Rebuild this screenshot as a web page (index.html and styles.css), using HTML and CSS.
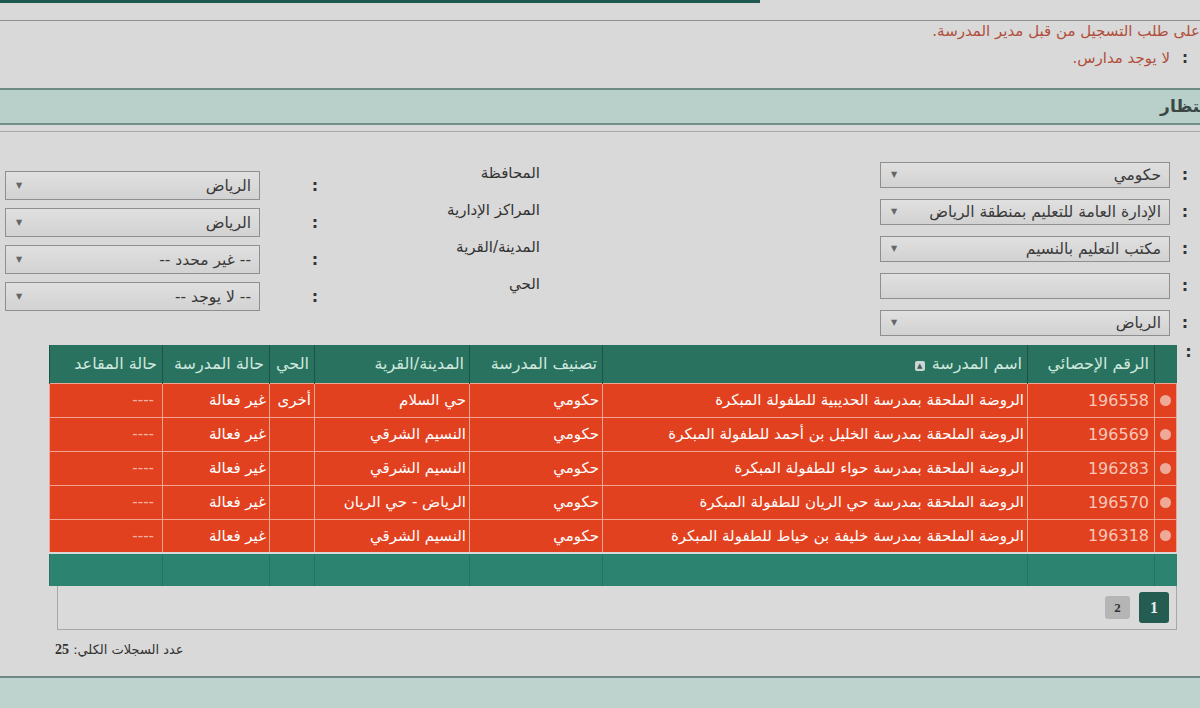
FILE: index.html
```html
<!DOCTYPE html>
<html lang="ar" dir="rtl">
<head>
  <meta charset="UTF-8" />
  <meta name="viewport" content="width=device-width, initial-scale=1.0" />
  <title>المدارس</title>
  <link rel="stylesheet" href="styles.css">
</head>
<body>
  <div class="top-strip"></div>
  <div class="top-area"></div>

  <div class="notes">
    <p class="note">على طلب التسجيل من قبل مدير المدرسة.</p>
    <p class="note"><span class="colon">:</span>لا يوجد مدارس.</p>
  </div>

  <div class="section-bar">
    <h2>انتظار</h2>
  </div>
  <div class="section-line"></div>

  <div class="search-form">
    <div class="col-main">
      <div class="field">
        <span class="colon">:</span>
        <div class="dropdown"><span>حكومي</span><span class="arrow">▼</span></div>
      </div>
      <div class="field">
        <span class="colon">:</span>
        <div class="dropdown"><span>الإدارة العامة للتعليم بمنطقة الرياض</span><span class="arrow">▼</span></div>
      </div>
      <div class="field">
        <span class="colon">:</span>
        <div class="dropdown"><span>مكتب التعليم بالنسيم</span><span class="arrow">▼</span></div>
      </div>
      <div class="field">
        <span class="colon">:</span>
        <div class="dropdown"></div>
      </div>
      <div class="field">
        <span class="colon">:</span>
        <div class="dropdown"><span>الرياض</span><span class="arrow">▼</span></div>
      </div>
    </div>

    <div class="col-side">
      <div class="field">
        <label>المحافظة</label>
        <span class="colon">:</span>
        <div class="dropdown"><span>الرياض</span><span class="arrow">▼</span></div>
      </div>
      <div class="field">
        <label>المراكز الإدارية</label>
        <span class="colon">:</span>
        <div class="dropdown"><span>الرياض</span><span class="arrow">▼</span></div>
      </div>
      <div class="field">
        <label>المدينة/القرية</label>
        <span class="colon">:</span>
        <div class="dropdown"><span>-- غير محدد --</span><span class="arrow">▼</span></div>
      </div>
      <div class="field">
        <label>الحي</label>
        <span class="colon">:</span>
        <div class="dropdown"><span>-- لا يوجد --</span><span class="arrow">▼</span></div>
      </div>
    </div>
  </div>

  <div class="results">
    <span class="colon">:</span>
    <div class="results-box">
      <table class="grid">
        <thead>
          <tr>
            <th class="c-radio"></th>
            <th class="c-num">الرقم الإحصائي</th>
            <th class="c-name">اسم المدرسة <span class="sort">&#9650;</span></th>
            <th class="c-type">تصنيف المدرسة</th>
            <th class="c-city">المدينة/القرية</th>
            <th class="c-hay">الحي</th>
            <th class="c-state">حالة المدرسة</th>
            <th class="c-seats">حالة المقاعد</th>
          </tr>
        </thead>
        <tbody>
          <tr>
            <td><span class="dot"></span></td>
            <td class="num">196558</td>
            <td>الروضة الملحقة بمدرسة الحديبية للطفولة المبكرة</td>
            <td>حكومي</td>
            <td>حي السلام</td>
            <td>أخرى</td>
            <td>غير فعالة</td>
            <td class="dash">----</td>
          </tr>
          <tr>
            <td><span class="dot"></span></td>
            <td class="num">196569</td>
            <td>الروضة الملحقة بمدرسة الخليل بن أحمد للطفولة المبكرة</td>
            <td>حكومي</td>
            <td>النسيم الشرقي</td>
            <td></td>
            <td>غير فعالة</td>
            <td class="dash">----</td>
          </tr>
          <tr>
            <td><span class="dot"></span></td>
            <td class="num">196283</td>
            <td>الروضة الملحقة بمدرسة حواء للطفولة المبكرة</td>
            <td>حكومي</td>
            <td>النسيم الشرقي</td>
            <td></td>
            <td>غير فعالة</td>
            <td class="dash">----</td>
          </tr>
          <tr>
            <td><span class="dot"></span></td>
            <td class="num">196570</td>
            <td>الروضة الملحقة بمدرسة حي الريان للطفولة المبكرة</td>
            <td>حكومي</td>
            <td>الرياض - حي الريان</td>
            <td></td>
            <td>غير فعالة</td>
            <td class="dash">----</td>
          </tr>
          <tr>
            <td><span class="dot"></span></td>
            <td class="num">196318</td>
            <td>الروضة الملحقة بمدرسة خليفة بن خياط للطفولة المبكرة</td>
            <td>حكومي</td>
            <td>النسيم الشرقي</td>
            <td></td>
            <td>غير فعالة</td>
            <td class="dash">----</td>
          </tr>
        </tbody>
        <tfoot>
          <tr>
            <td></td><td></td><td></td><td></td><td></td><td></td><td></td><td></td>
          </tr>
        </tfoot>
      </table>
      <div class="pager">
        <span class="page active">1</span>
        <span class="page">2</span>
      </div>
    </div>
  </div>

  <div class="total">عدد السجلات الكلي: <b>25</b></div>

  <div class="bottom-bar"></div>
</body>
</html>
```

FILE: styles.css
```css
html, body {
  height: 708px;
}
body {
  margin: 0;
  background: #d9d9d9;
  color: #333;
  font-family: "DejaVu Sans", "Noto Sans", sans-serif;
  overflow: hidden;
}
.top-strip {
  height: 3px;
  width: 760px;
  margin-left: 0;
  margin-right: auto;
  background: #1f5a50;
}
.top-area {
  height: 17px;
  border-bottom: 1px solid #8f8f8f;
}
.note {
  margin: 0;
  height: 20px;
  line-height: 20px;
  font-size: 15px;
  color: #b14f3c;
  white-space: nowrap;
}
.note + .note {
  margin-top: 7px;
}
.colon {
  display: inline-block;
  width: 24px;
  text-align: center;
  color: #333;
  font-weight: bold;
}
.note .colon {
  width: 30px;
}
.section-bar {
  margin-top: 20px;
  height: 33px;
  border-top: 2px solid #6d8a84;
  border-bottom: 2px solid #72908a;
  background: #b9cfc9;
}
.section-bar h2 {
  margin: 0 -12px 0 0;
  line-height: 33px;
  font-size: 17px;
  color: #3a4744;
}
.section-line {
  margin-top: 6px;
  border-top: 1px solid #a8a8a8;
}

/* search form */
.search-form {
  display: flex;
  margin-top: 29px;
}
.col-main {
  width: 330px;
}
.col-main .field {
  display: flex;
  align-items: center;
  height: 27px;
  margin-bottom: 10px;
}
.col-main .field:last-child {
  margin-bottom: 0;
}
.col-main .colon {
  width: 30px;
}
.col-main .dropdown {
  width: 290px;
  height: 26px;
}
.col-side {
  flex: 1;
  padding-top: 9px;
}
.col-side .field {
  display: flex;
  align-items: center;
  height: 31px;
  margin-bottom: 6px;
  margin-right: 330px;
}
.col-side label {
  width: 200px;
  align-self: flex-start;
  margin-top: -6px;
  font-size: 15px;
  color: #333;
}
.col-side .colon {
  width: 50px;
  margin-left: 30px;
}
.col-side .dropdown {
  width: 255px;
  height: 29px;
}
.dropdown {
  display: flex;
  align-items: center;
  justify-content: space-between;
  padding: 0 8px 0 10px;
  box-sizing: border-box;
  background: linear-gradient(#e0e0e0, #d2d2d2);
  border: 1px solid #8f8f8f;
  font-size: 15.5px;
  color: #3a3a3a;
  white-space: nowrap;
}
.dropdown .arrow {
  font-size: 8px;
  color: #666;
}

/* results table */
.results {
  display: flex;
  align-items: flex-start;
  margin-top: 9px;
}
.results .colon {
  width: 23px;
  line-height: 14px;
}
.results-box {
  width: 1127px;
}
.grid {
  width: 1127px;
  border-collapse: collapse;
  table-layout: fixed;
  font-size: 15px;
}
.grid th,
.grid td {
  box-sizing: border-box;
}
.grid th {
  height: 38px;
  padding: 0 5px;
  background: #29725f;
  color: #cfe8de;
  font-weight: normal;
  font-size: 16px;
  text-align: right;
  border-left: 1px solid #1d5247;
  white-space: nowrap;
  overflow: hidden;
}
.c-radio { width: 22px; }
.c-num { width: 127px; }
.c-name { width: 425px; }
.c-type { width: 133px; }
.c-city { width: 155px; }
.c-hay { width: 45px; }
.c-state { width: 107px; }
.c-seats { width: 113px; }
.sort {
  display: inline-block;
  width: 10px;
  height: 10px;
  line-height: 10px;
  margin-right: 2px;
  background: #c9d6d2;
  color: #4a5a56;
  font-size: 7px;
  text-align: center;
  border-radius: 2px;
  vertical-align: 1px;
}
.grid tbody td {
  height: 34px;
  padding: 0 3px;
  background: #e2411f;
  color: #fff;
  border: 1px solid #f0a592;
  text-align: right;
  white-space: nowrap;
  overflow: hidden;
}
.grid tbody td.num {
  color: #f7c7b9;
  font-size: 16px;
  padding-right: 5px;
}
.grid tbody td.dash {
  color: #f3b3a2;
  padding-right: 8px;
}
.dot {
  display: block;
  width: 11px;
  height: 11px;
  margin: 0 auto;
  border-radius: 50%;
  background: #eea999;
}
.grid tfoot td {
  height: 33px;
  padding: 0;
  background: #2c8370;
  border-left: 1px solid #277361;
  border-top: 2px solid #d8d8d8;
}
.pager {
  display: flex;
  align-items: center;
  gap: 9px;
  height: 43px;
  margin-left: 7px;
  padding-right: 7px;
  border: 1px solid #a7a7a7;
  border-top: 0;
  background: #dadada;
}
.page {
  display: flex;
  align-items: center;
  justify-content: center;
  width: 25px;
  height: 23px;
  background: #b5b5b5;
  color: #333;
  font-family: "Liberation Serif", serif;
  font-weight: bold;
  font-size: 13px;
  border-radius: 3px;
}
.page.active {
  width: 30px;
  height: 31px;
  background: #245c52;
  color: #e3efeb;
  font-size: 16px;
}
.total {
  margin-top: 12px;
  padding-left: 55px;
  text-align: left;
  font-size: 13px;
  color: #333;
}
.total b {
  font-family: "Liberation Serif", serif;
  font-size: 14px;
}
.bottom-bar {
  margin-top: 18px;
  height: 40px;
  border-top: 2px solid #6f8a84;
  background: #bed3cd;
}
```
